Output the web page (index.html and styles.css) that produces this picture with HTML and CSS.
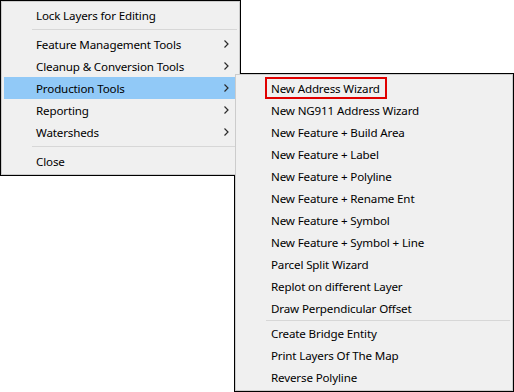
FILE: index.html
```html
<!DOCTYPE html>
<html lang="en">
<head>
  <meta charset="UTF-8">
  <title>Production Tools menu</title>
  <link rel="stylesheet" href="styles.css">
</head>
<body>
  <div class="menus">
    <ul class="menu main-menu">
      <li class="item">Lock Layers for Editing</li>
      <li class="sep"></li>
      <li class="item has-sub">Feature Management Tools
        <svg class="chev" width="5" height="8" viewBox="0 0 5 8"><path d="M0.5 0.5 L4 4 L0.5 7.5" /></svg>
      </li>
      <li class="item has-sub">Cleanup &amp; Conversion Tools
        <svg class="chev" width="5" height="8" viewBox="0 0 5 8"><path d="M0.5 0.5 L4 4 L0.5 7.5" /></svg>
      </li>
      <li class="item has-sub active">Production Tools
        <svg class="chev" width="5" height="8" viewBox="0 0 5 8"><path d="M0.5 0.5 L4 4 L0.5 7.5" /></svg>
      </li>
      <li class="item has-sub">Reporting
        <svg class="chev" width="5" height="8" viewBox="0 0 5 8"><path d="M0.5 0.5 L4 4 L0.5 7.5" /></svg>
      </li>
      <li class="item has-sub">Watersheds
        <svg class="chev" width="5" height="8" viewBox="0 0 5 8"><path d="M0.5 0.5 L4 4 L0.5 7.5" /></svg>
      </li>
      <li class="sep"></li>
      <li class="item">Close</li>
    </ul>

    <ul class="menu sub-menu">
      <li class="item"><span class="marked">New Address Wizard</span></li>
      <li class="item">New NG911 Address Wizard</li>
      <li class="item">New Feature + Build Area</li>
      <li class="item">New Feature + Label</li>
      <li class="item">New Feature + Polyline</li>
      <li class="item">New Feature + Rename Ent</li>
      <li class="item">New Feature + Symbol</li>
      <li class="item">New Feature + Symbol + Line</li>
      <li class="item">Parcel Split Wizard</li>
      <li class="item">Replot on different Layer</li>
      <li class="item">Draw Perpendicular Offset</li>
      <li class="sep small"></li>
      <li class="item">Create Bridge Entity</li>
      <li class="item">Print Layers Of The Map</li>
      <li class="item">Reverse Polyline</li>
    </ul>
  </div>
</body>
</html>
```

FILE: styles.css
```css
body {
  margin: 0;
  background: #fff;
  font-family: "Segoe UI", "Noto Sans", sans-serif;
  font-size: 11.6px;
  letter-spacing: -0.15px;
  color: #000;
}

.menus {
  position: relative;
  z-index: 0;
  width: 514px;
  height: 392px;
}

.menu {
  list-style: none;
  margin: 0;
  padding: 2px;
  background: #f0f0f0;
  border: 1px solid #cccccc;
  box-sizing: border-box;
}

/* black outline drawn behind both menus so it only shows round their union */
.menu::before {
  content: "";
  position: absolute;
  top: -2px;
  left: -2px;
  right: -2px;
  bottom: -2px;
  background: #000;
  z-index: -1;
}

.main-menu {
  position: relative;
  top: 1px;
  left: 1px;
  width: 239px;
  height: 174px;
}

.sub-menu {
  position: absolute;
  top: 74px;
  left: 235px;
  width: 278px;
  height: 317px;
}

.item {
  display: flex;
  align-items: center;
  height: 22px;
  padding-right: 8px;
  white-space: nowrap;
}

.main-menu .item {
  padding-left: 32px;
}

.sub-menu .item {
  padding-left: 33px;
}

.item.active {
  background: #91c9f7;
}

.chev {
  margin-left: auto;
  fill: none;
  stroke: #2b2b2b;
  stroke-width: 1.2;
}

.sep {
  height: 1px;
  margin: 3px 0 3px 28px;
  background: #d7d7d7;
}

.sep.small {
  margin: 1px 0 1px 28px;
}

.marked {
  display: flex;
  align-items: center;
  height: 100%;
  margin-left: -6px;
  padding: 0 7px 0 6px;
  box-shadow: inset 0 0 0 2px #e00000;
}
```
